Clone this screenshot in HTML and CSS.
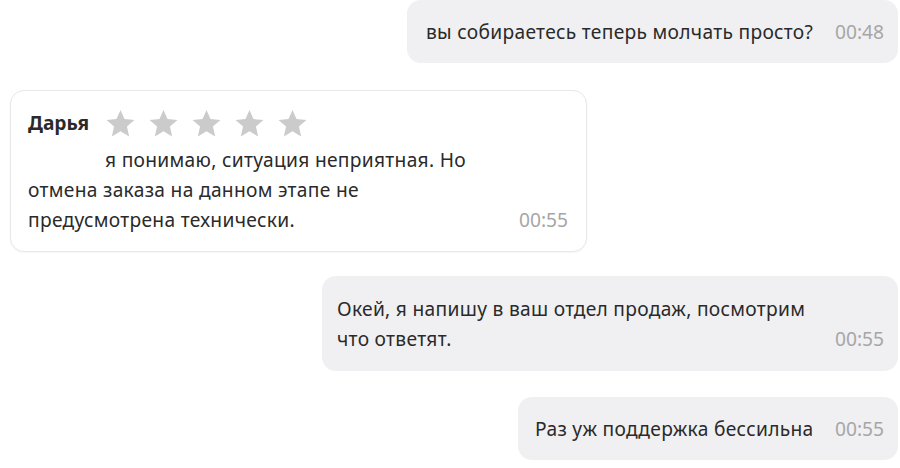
FILE: index.html
```html
<!DOCTYPE html>
<html lang="ru">
<head>
<meta charset="utf-8">
<link rel="stylesheet" href="styles.css">
</head>
<body>
<div class="chat">
  <div class="msg out w1">
    <span class="text">вы собираетесь теперь молчать просто?</span>
    <span class="time">00:48</span>
  </div>

  <div class="msg in">
    <div class="head">
      <span class="name">Дарья</span>
      <span class="stars">
        <svg class="star" viewBox="0 0 24 24"><polygon points="12,1.5 15.1,8.6 22.8,9.3 17,14.4 18.7,22 12,18 5.3,22 7,14.4 1.2,9.3 8.9,8.6"/></svg>
        <svg class="star" viewBox="0 0 24 24"><polygon points="12,1.5 15.1,8.6 22.8,9.3 17,14.4 18.7,22 12,18 5.3,22 7,14.4 1.2,9.3 8.9,8.6"/></svg>
        <svg class="star" viewBox="0 0 24 24"><polygon points="12,1.5 15.1,8.6 22.8,9.3 17,14.4 18.7,22 12,18 5.3,22 7,14.4 1.2,9.3 8.9,8.6"/></svg>
        <svg class="star" viewBox="0 0 24 24"><polygon points="12,1.5 15.1,8.6 22.8,9.3 17,14.4 18.7,22 12,18 5.3,22 7,14.4 1.2,9.3 8.9,8.6"/></svg>
        <svg class="star" viewBox="0 0 24 24"><polygon points="12,1.5 15.1,8.6 22.8,9.3 17,14.4 18.7,22 12,18 5.3,22 7,14.4 1.2,9.3 8.9,8.6"/></svg>
      </span>
    </div>
    <div class="body">
      <p class="text indent">я понимаю, ситуация неприятная. Но<br>отмена заказа на данном этапе не<br>предусмотрена технически.</p>
      <span class="time">00:55</span>
    </div>
  </div>

  <div class="msg out w3">
    <p class="text">Окей, я напишу в ваш отдел продаж, посмотрим<br>что ответят.</p>
    <span class="time">00:55</span>
  </div>

  <div class="msg out w4">
    <span class="text">Раз уж поддержка бессильна</span>
    <span class="time">00:55</span>
  </div>
</div>
</body>
</html>
```

FILE: styles.css
```css
html, body {
  margin: 0;
  padding: 0;
  background: #ffffff;
}

body {
  font-family: "Noto Sans", "Open Sans", sans-serif;
  font-size: 19.2px;
  color: #2a2a2a;
}

.chat {
  display: flex;
  flex-direction: column;
  gap: 26px;
  padding: 0 2px 0 10px;
}

.msg {
  box-sizing: border-box;
  border-radius: 14px;
  line-height: 30px;
  display: flex;
  align-items: flex-end;
  justify-content: space-between;
}

.text {
  margin: 0;
  letter-spacing: 0.3px;
}

.time {
  color: #a6a6a6;
  margin-left: 16px;
  white-space: nowrap;
}

.out {
  align-self: flex-end;
  background: #f0f0f2;
  padding: 17px 14px 16px 19px;
}

.w1 {
  width: 491px;
  height: 63px;
}

.w3 {
  width: 576px;
  padding: 18px 14px 17px 15px;
  margin-top: -2px;
}

.w4 {
  width: 380px;
  padding: 17px 14px 16px 17px;
}

.in {
  align-self: flex-start;
  flex-direction: column;
  align-items: stretch;
  width: 577px;
  background: #ffffff;
  border: 1px solid #e8e8e8;
  box-shadow: 0 1px 2px rgba(0, 0, 0, 0.04);
  padding: 17px 18px 16px 17px;
  margin-top: 1px;
}

.head {
  display: flex;
  align-items: center;
  height: 30px;
  gap: 16px;
  margin-bottom: 7px;
}

.name {
  font-weight: 700;
}

.stars {
  display: flex;
  gap: 12px;
}

.star {
  width: 31px;
  height: 31px;
  display: block;
  fill: #cbcbcb;
}

.body {
  display: flex;
  align-items: flex-end;
  justify-content: space-between;
}

.indent {
  text-indent: 77px;
}
```
